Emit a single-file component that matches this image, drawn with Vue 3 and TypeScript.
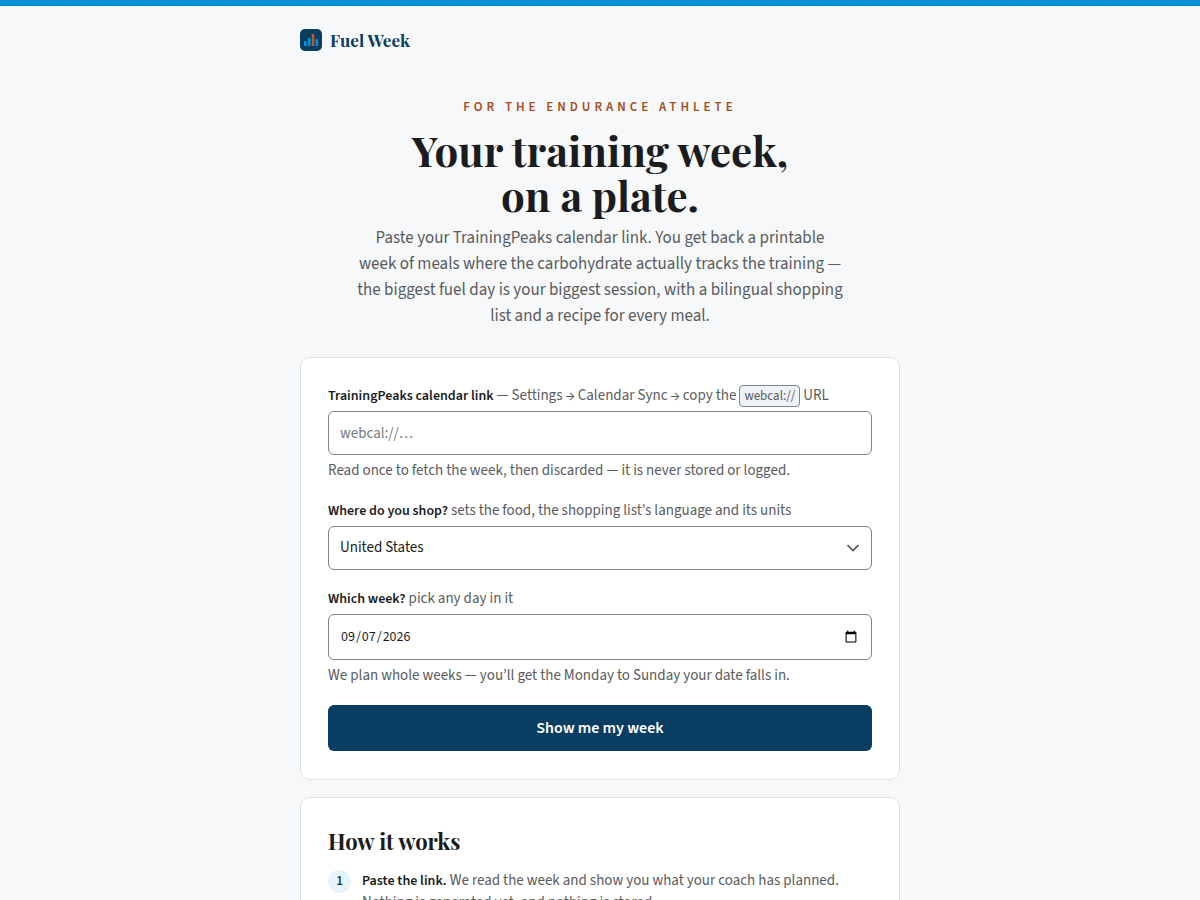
<script setup lang="ts">
import { ref } from 'vue'

interface Step {
  title: string
  text: string
}

const link = ref('')
const country = ref('United States')
const day = ref('2026-09-07')
const countries: string[] = ['United States', 'United Kingdom', 'Spain', 'France', 'Germany']
const steps: Step[] = [
  {
    title: 'Paste the link.',
    text: 'We read the week and show you what your coach has planned. Nothing is generated yet, and nothing is stored.',
  },
]
</script>

<template>
  <div class="page">
    <div class="wrap">
      <header class="brand">
        <svg class="logo" viewBox="0 0 22 22" aria-hidden="true">
          <rect width="22" height="22" rx="5" fill="#0a3d62" />
          <rect x="4" y="12" width="2.6" height="5" rx=".5" fill="#0a8fdb" />
          <rect x="7.9" y="9" width="2.6" height="8" rx=".5" fill="#0a8fdb" />
          <rect x="11.7" y="5" width="2.6" height="12" rx=".5" fill="#c05a26" />
          <rect x="15.5" y="10" width="2.6" height="7" rx=".5" fill="#0a8fdb" />
        </svg>
        <span class="name">Fuel Week</span>
      </header>

      <main>
        <section class="hero">
          <p class="eyebrow">For the endurance athlete</p>
          <h1>Your training week,<br />on a plate.</h1>
          <p class="lede">
            Paste your TrainingPeaks calendar link. You get back a printable week of meals where the
            carbohydrate actually tracks the training — the biggest fuel day is your biggest session,
            with a bilingual shopping list and a recipe for every meal.
          </p>
        </section>

        <form class="card" @submit.prevent>
          <div class="field">
            <label for="link"><b>TrainingPeaks calendar link</b> — Settings → Calendar Sync → copy the <code>webcal://</code> URL</label>
            <input id="link" v-model="link" type="text" placeholder="webcal://…" />
            <p class="hint">Read once to fetch the week, then discarded — it is never stored or logged.</p>
          </div>
          <div class="field">
            <label for="country"><b>Where do you shop?</b> sets the food, the shopping list’s language and its units</label>
            <div class="select">
              <select id="country" v-model="country">
                <option v-for="c in countries" :key="c">{{ c }}</option>
              </select>
              <svg class="chevron" viewBox="0 0 12 8" aria-hidden="true">
                <path d="M.5 1l5.5 5.5 5.5-5.5" fill="none" stroke="#55585c" stroke-width="1.7" />
              </svg>
            </div>
          </div>
          <div class="field">
            <label for="day"><b>Which week?</b> pick any day in it</label>
            <input id="day" v-model="day" type="date" />
            <p class="hint">We plan whole weeks — you’ll get the Monday to Sunday your date falls in.</p>
          </div>
          <button type="submit">Show me my week</button>
        </form>

        <section class="card how">
          <h2>How it works</h2>
          <ol>
            <li v-for="(step, i) in steps" :key="step.title">
              <span class="num">{{ i + 1 }}</span>
              <p><b>{{ step.title }}</b> {{ step.text }}</p>
            </li>
          </ol>
        </section>
      </main>
    </div>
  </div>
</template>

<style>
html {
  background: #f6f8fa;
}
body {
  margin: 0;
  height: 100vh;
  overflow: hidden;
}
</style>

<style scoped>
.page {
  height: 100vh;
  overflow: hidden;
  box-sizing: border-box;
  border-top: 6px solid #0590db;
  background: #f6f8fa;
  color: #1b1c1d;
  font-family: "Source Sans 3", "Source Sans Pro", "Noto Sans", sans-serif;
  font-size: 15px;
  line-height: 22px;
}
.wrap {
  max-width: 600px;
  margin: 0 auto;
}
.brand {
  display: flex;
  align-items: center;
  gap: 8px;
  padding: 22px 0;
}
.logo {
  width: 22px;
  height: 22px;
}
.name,
h1,
h2 {
  font-family: "Playfair Display", "Liberation Serif", serif;
  font-weight: 700;
}
.name {
  font-size: 17px;
  line-height: 24px;
  color: #0a3d62;
}
.hero {
  text-align: center;
  padding: 22px 0 28px;
}
p,
h1,
h2,
ol {
  margin: 0;
  padding: 0;
}
.eyebrow {
  color: #a84d1c;
  font-size: 13px;
  font-weight: 600;
  letter-spacing: 4px;
  text-transform: uppercase;
}
h1 {
  margin-top: 10px;
  font-size: 42px;
  line-height: 45px;
}
.lede {
  max-width: 487px;
  margin: 7px auto 0;
  color: #5a5c5e;
  font-size: 17px;
  line-height: 26px;
}
.card {
  display: flex;
  flex-direction: column;
  gap: 18px;
  padding: 28px 27px;
  border: 1px solid #dde4e9;
  border-radius: 10px;
  background: #fff;
}
.card:first-of-type {
  padding-top: 27px;
}
.field {
  display: flex;
  flex-direction: column;
}
label,
.hint,
li p {
  color: #5a5c5e;
}
label {
  margin-bottom: 4px;
}
b {
  font-size: 14px;
  font-weight: 600;
  color: #1b1c1d;
}
code {
  padding: 1px 4px;
  border: 1px solid #7c858d;
  border-radius: 4px;
  background: #eef3f6;
  font-family: inherit;
  font-size: 13px;
}
input,
select {
  box-sizing: border-box;
  width: 100%;
  height: 44px;
  padding: 0 11px;
  border: 1px solid #7c858d;
  border-radius: 6px;
  background: #fff;
  color: #1b1c1d;
  font: inherit;
}
input::placeholder {
  color: #757c83;
  opacity: 1;
}
input[type="date"] {
  height: 46px;
  font-size: 14px;
}
select {
  appearance: none;
  display: block;
}
.select {
  position: relative;
}
.chevron {
  position: absolute;
  right: 13px;
  top: 18px;
  width: 12px;
  height: 8px;
  pointer-events: none;
}
.hint {
  margin-top: 5px;
}
button {
  height: 46px;
  border: 0;
  border-radius: 6px;
  background: #0a3d62;
  color: #fff;
  font: inherit;
  font-size: 16px;
  font-weight: 600;
}
.card.how {
  margin-top: 17px;
  padding-top: 27px;
  gap: 13px;
}
h2 {
  font-size: 22px;
  line-height: 32px;
}
ol {
  list-style: none;
}
li {
  display: flex;
  gap: 11px;
}
.num {
  flex: none;
  width: 23px;
  height: 23px;
  border-radius: 50%;
  background: #e6f4fc;
  color: #0a3d62;
  font-size: 13px;
  font-weight: 600;
  line-height: 23px;
  text-align: center;
}
</style>
